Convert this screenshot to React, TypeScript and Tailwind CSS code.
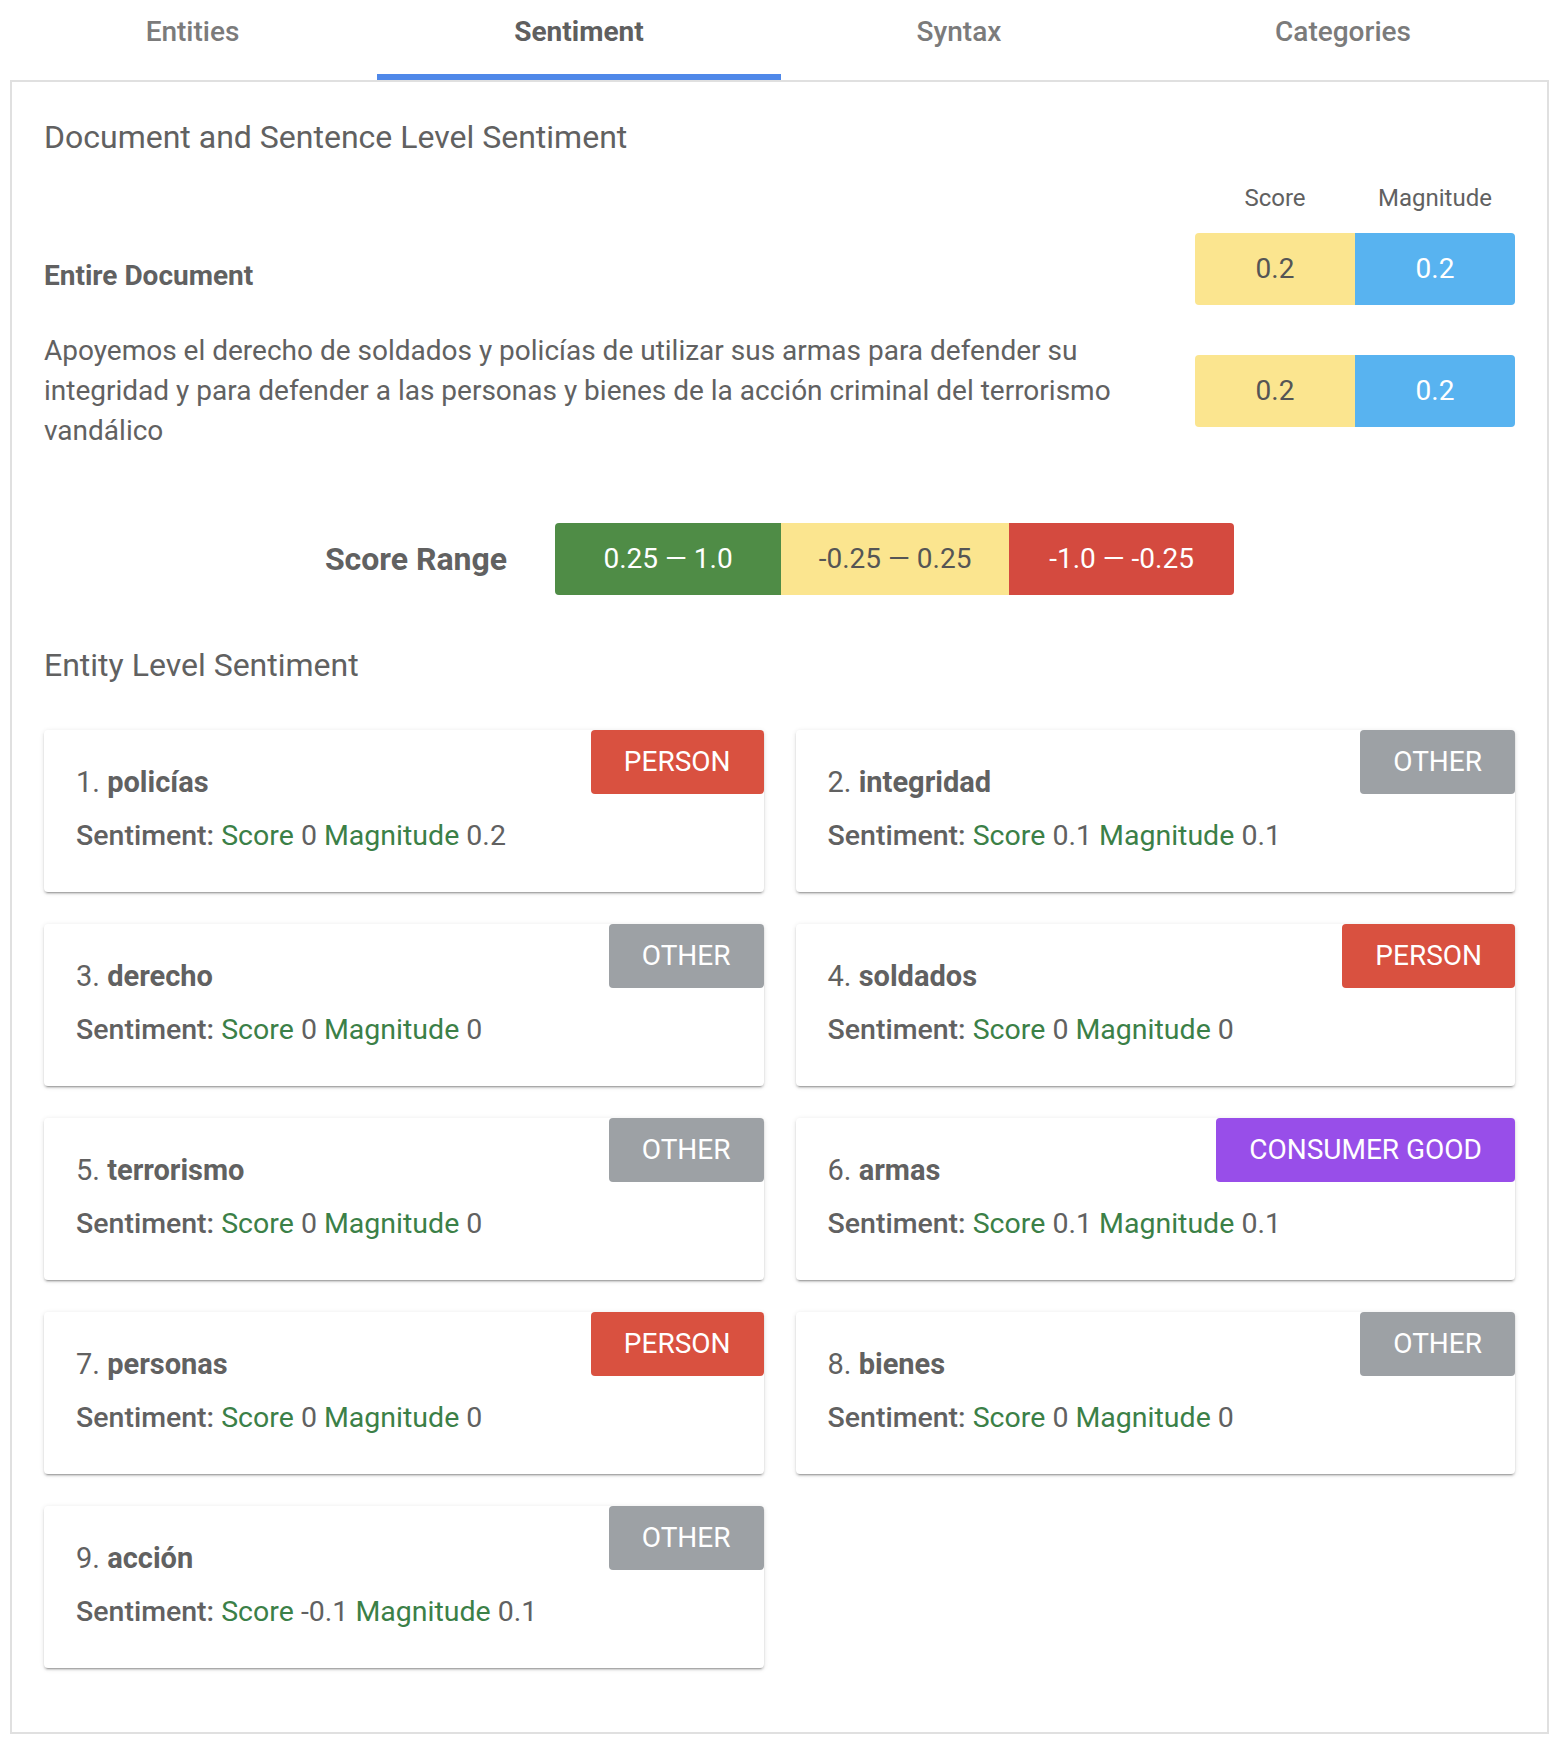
import React from "react";

const tabs = [
  { label: "Entities", w: "w-[369px]" },
  { label: "Sentiment", w: "w-[404px]", active: true },
  { label: "Syntax", w: "w-[356px]" },
  { label: "Categories", w: "w-[412px]" },
];

type Entity = {
  name: string;
  type: "PERSON" | "OTHER" | "CONSUMER GOOD";
  score: string;
  magnitude: string;
};

const entities: Entity[] = [
  { name: "policías", type: "PERSON", score: "0", magnitude: "0.2" },
  { name: "integridad", type: "OTHER", score: "0.1", magnitude: "0.1" },
  { name: "derecho", type: "OTHER", score: "0", magnitude: "0" },
  { name: "soldados", type: "PERSON", score: "0", magnitude: "0" },
  { name: "terrorismo", type: "OTHER", score: "0", magnitude: "0" },
  { name: "armas", type: "CONSUMER GOOD", score: "0.1", magnitude: "0.1" },
  { name: "personas", type: "PERSON", score: "0", magnitude: "0" },
  { name: "bienes", type: "OTHER", score: "0", magnitude: "0" },
  { name: "acción", type: "OTHER", score: "-0.1", magnitude: "0.1" },
];

const badgeColor: Record<Entity["type"], string> = {
  PERSON: "bg-[#d95140]",
  OTHER: "bg-[#9da1a5]",
  "CONSUMER GOOD": "bg-[#984ee9]",
};

function ScorePair({ score, magnitude }: { score: string; magnitude: string }) {
  return (
    <div className="flex shrink-0">
      <div className="w-[160px] h-[72px] flex items-center justify-center bg-[#fbe58f] text-[#555] text-[28px] rounded-l-[4px]">
        {score}
      </div>
      <div className="w-[160px] h-[72px] flex items-center justify-center bg-[#58b3f0] text-white text-[28px] rounded-r-[4px]">
        {magnitude}
      </div>
    </div>
  );
}

function EntityCard({ e, i }: { e: Entity; i: number }) {
  return (
    <div className="relative bg-white rounded-[4px] h-[162px] px-[32px] pt-[32px] shadow-[0_2px_2px_0_rgba(0,0,0,0.14),0_3px_1px_-2px_rgba(0,0,0,0.2),0_1px_5px_0_rgba(0,0,0,0.12)]">
      <div className="text-[29px] leading-[40px] text-[#616161]">
        {i + 1}. <span className="font-bold">{e.name}</span>
      </div>
      <div className="mt-[14px] text-[28.5px] leading-[40px] text-[#616161]">
        <span className="font-medium">Sentiment:</span>{" "}
        <span className="text-[#3b8047]">Score</span> {e.score}{" "}
        <span className="text-[#3b8047]">Magnitude</span> {e.magnitude}
      </div>
      <div
        className={`absolute top-0 right-0 h-[64px] px-[33px] flex items-center text-white text-[28px] rounded-[4px] ${badgeColor[e.type]}`}
      >
        {e.type}
      </div>
    </div>
  );
}

export default function App() {
  return (
    <div className="w-[1566px] min-h-[1752px] bg-white font-['Roboto',sans-serif] text-[#616161]">
      {/* TABS */}
      <div className="flex h-[80px] pl-[8px]">
        {tabs.map((t) => (
          <div
            key={t.label}
            className={`${t.w} h-full flex flex-col items-center justify-between pt-[15px]`}
          >
            <span
              className={`text-[28px] leading-[34px] ${
                t.active ? "text-[#5f5f5f] font-bold" : "text-[#7b7b7b] font-medium"
              }`}
            >
              {t.label}
            </span>
            <div
              className={`w-full h-[6px] ${t.active ? "bg-[#4f88e9]" : "bg-transparent"}`}
            />
          </div>
        ))}
      </div>

      {/* PANEL */}
      <div className="ml-[10px] w-[1539px] border-2 border-[#e0e0e0] px-[32px] pt-[36px] pb-[64px]">
        <h2 className="text-[32px] leading-[38px] font-normal">
          Document and Sentence Level Sentiment
        </h2>

        <div className="mt-[26px] flex justify-end">
          <div className="w-[160px] text-center text-[24px] leading-[32px]">Score</div>
          <div className="w-[160px] text-center text-[24px] leading-[32px]">Magnitude</div>
        </div>

        <div className="mt-[19px] flex items-center justify-between">
          <div className="text-[28px] font-bold pt-[14px]">Entire Document</div>
          <ScorePair score="0.2" magnitude="0.2" />
        </div>

        <div className="mt-[26px] flex items-center justify-between gap-[60px]">
          <p className="flex-1 text-[28px] leading-[40px]">
            Apoyemos el derecho de soldados y policías de utilizar sus armas para defender su
            integridad y para defender a las personas y bienes de la acción criminal del
            terrorismo vandálico
          </p>
          <ScorePair score="0.2" magnitude="0.2" />
        </div>

        {/* SCORE RANGE */}
        <div className="mt-[72px] flex items-center justify-center gap-[48px]">
          <div className="text-[32px] font-bold">Score Range</div>
          <div className="flex h-[72px] text-[28px]">
            <div className="w-[226px] flex items-center justify-center bg-[#4f8c46] text-white rounded-l-[4px]">
              0.25 — 1.0
            </div>
            <div className="w-[228px] flex items-center justify-center bg-[#fbe58f] text-[#555]">
              -0.25 — 0.25
            </div>
            <div className="w-[225px] flex items-center justify-center bg-[#d44a3f] text-white rounded-r-[4px]">
              -1.0 — -0.25
            </div>
          </div>
        </div>

        <h2 className="mt-[51px] text-[32px] leading-[38px] font-normal">
          Entity Level Sentiment
        </h2>

        <div className="mt-[46px] grid grid-cols-2 gap-[32px]">
          {entities.map((e, i) => (
            <EntityCard key={e.name} e={e} i={i} />
          ))}
        </div>
      </div>
    </div>
  );
}
